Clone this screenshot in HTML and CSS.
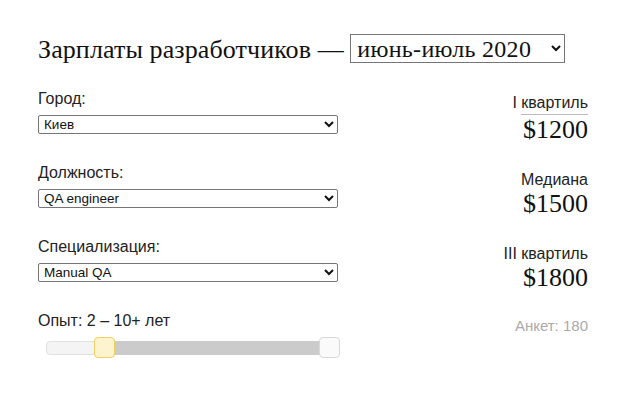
FILE: index.html
```html
<!DOCTYPE html>
<html lang="ru">
<head>
    <meta charset="UTF-8">
    <title>Зарплаты разработчиков</title>
    <link rel="stylesheet" href="styles.css">
</head>
<body>
    <div class="page">
        <h1 class="title">Зарплаты разработчиков —
            <select class="period">
                <option>июнь-июль 2020</option>
            </select>
        </h1>
        <div class="main">
            <div class="filters">
                <div class="field">
                    <div class="label">Город:</div>
                    <select class="pick"><option>Киев</option></select>
                </div>
                <div class="field">
                    <div class="label">Должность:</div>
                    <select class="pick"><option>QA engineer</option></select>
                </div>
                <div class="field">
                    <div class="label">Специализация:</div>
                    <select class="pick"><option>Manual QA</option></select>
                </div>
                <div class="field">
                    <div class="label">Опыт: 2 – 10+ лет</div>
                    <div class="range">
                        <div class="track-off"></div>
                        <div class="track-on"></div>
                        <div class="handle handle-active" style="left: 48px"></div>
                        <div class="handle" style="left: 273px"></div>
                    </div>
                </div>
            </div>
            <div class="stats">
                <div class="stat">
                    <div class="stat-name">I <span class="underlined">квартиль</span></div>
                    <div class="stat-value">$1200</div>
                </div>
                <div class="stat">
                    <div class="stat-name">Медиана</div>
                    <div class="stat-value">$1500</div>
                </div>
                <div class="stat">
                    <div class="stat-name">III квартиль</div>
                    <div class="stat-value">$1800</div>
                </div>
                <div class="count">Анкет: 180</div>
            </div>
        </div>
    </div>
</body>
</html>
```

FILE: styles.css
```css
body {
    margin: 0;
    padding: 0;
    background-color: #fff;
    color: #111;
    font-family: "Liberation Sans", Arial, sans-serif;
}
.page {
    width: 550px;
    padding: 32px 0 0 38px;
}
.title {
    margin: 0 0 22px 0;
    font-family: "Liberation Serif", Georgia, serif;
    font-weight: normal;
    font-size: 26px;
    letter-spacing: 0.1px;
    line-height: 36px;
    color: #111;
}
.period {
    font-family: "Liberation Serif", Georgia, serif;
    font-size: 24px;
    letter-spacing: 0.3px;
    height: 29px;
    width: 215px;
    padding: 0 2px;
    border: 1px solid #767676;
    border-radius: 0;
    background-color: #fff;
    color: #111;
    vertical-align: 1px;
}
.main {
    display: flex;
}
.filters {
    width: 300px;
}
.field {
    margin-bottom: 30px;
}
.label {
    font-size: 16px;
    line-height: 18px;
    margin-bottom: 7px;
    color: #222;
}
.pick {
    display: block;
    width: 300px;
    height: 19px;
    font-family: "Liberation Sans", Arial, sans-serif;
    font-size: 13.5px;
    padding: 0 1px;
    border: 1px solid #767676;
    border-radius: 2px;
    background-color: #fff;
    color: #111;
}
.range {
    position: relative;
    height: 22px;
    margin-left: 8px;
    width: 294px;
}
.track-off {
    position: absolute;
    left: 0;
    top: 4px;
    width: 60px;
    height: 12px;
    background-color: #f4f4f4;
    border: 1px solid #e0e0e0;
    border-radius: 4px;
}
.track-on {
    position: absolute;
    left: 58px;
    right: 10px;
    top: 4px;
    height: 14px;
    background-color: #cbcbcb;
}
.handle {
    position: absolute;
    top: 0;
    width: 19px;
    height: 19px;
    background-color: #fafafa;
    border: 1px solid #d8d8d8;
    border-radius: 4px;
}
.handle-active {
    background-color: #fdf3cf;
    border-color: #f0d060;
}
.stats {
    flex: 1;
    text-align: right;
    padding-top: 4px;
}
.stat {
    margin-bottom: 26px;
}
.stat-name {
    font-size: 16px;
    line-height: 18px;
    color: #222;
}
.underlined {
    display: inline-block;
    line-height: 18px;
    border-bottom: 1px solid #bbb;
    padding-bottom: 2px;
}
.stat-value {
    font-family: "Liberation Serif", Georgia, serif;
    font-size: 26px;
    line-height: 30px;
    color: #111;
}
.count {
    font-size: 15px;
    color: #aaa;
    margin-top: -2px;
}
```
